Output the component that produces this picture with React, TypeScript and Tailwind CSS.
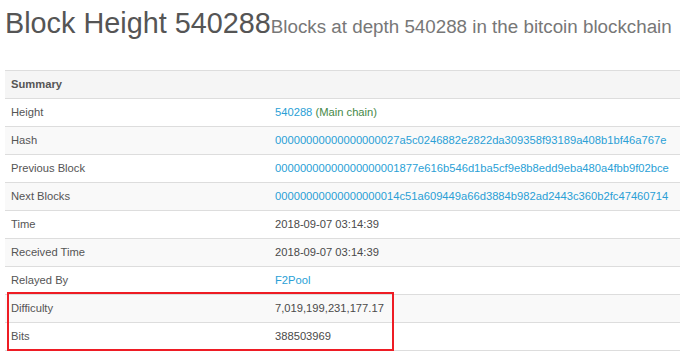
import React from "react";

type Row = { label: string; value: React.ReactNode };

const link = "text-[#2a9fd6]";

const rows: Row[] = [
  {
    label: "Height",
    value: (
      <>
        <span className={link}>540288</span>{" "}
        <span className="text-[#468847]">(Main chain)</span>
      </>
    ),
  },
  { label: "Hash", value: <span className={link}>00000000000000000027a5c0246882e2822da309358f93189a408b1bf46a767e</span> },
  { label: "Previous Block", value: <span className={link}>00000000000000000001877e616b546d1ba5cf9e8b8edd9eba480a4fbb9f02bce</span> },
  { label: "Next Blocks", value: <span className={link}>00000000000000000014c51a609449a66d3884b982ad2443c360b2fc47460714</span> },
  { label: "Time", value: "2018-09-07 03:14:39" },
  { label: "Received Time", value: "2018-09-07 03:14:39" },
  { label: "Relayed By", value: <span className={link}>F2Pool</span> },
  { label: "Difficulty", value: "7,019,199,231,177.17" },
  { label: "Bits", value: "388503969" },
];

export default function App() {
  return (
    <div
      className="relative w-[680px] h-[355px] overflow-hidden bg-white"
      style={{ fontFamily: '"Liberation Sans", Arial, sans-serif' }}
    >
      <div className="pl-[5px] pt-[7px] flex items-baseline whitespace-nowrap">
        <h1 className="text-[28.8px] leading-[32px] text-[#555555] font-normal">Block Height 540288</h1>
        <span className="text-[18.8px] text-[#777777]">Blocks at depth 540288 in the bitcoin blockchain</span>
      </div>
      <div className="mt-[29px] ml-[5px] w-[700px] border-b border-[#dddddd] text-[11.2px] leading-[17px]">
        <div className="flex border-t border-[#dddddd] bg-[#f5f5f5]">
          <div className="w-[264px] px-[6px] py-[5px] font-bold text-[#555555]">Summary</div>
          <div className="flex-1 px-[6px] py-[5px]">&nbsp;</div>
        </div>
        {rows.map((r, i) => (
          <div
            key={r.label}
            className={`flex border-t border-[#dddddd] ${i % 2 === 1 ? "bg-[#f9f9f9]" : "bg-white"}`}
          >
            <div className="w-[264px] shrink-0 px-[6px] py-[5px] text-[#555555]">{r.label}</div>
            <div className="flex-1 px-[6px] py-[5px] text-[#4a4a4a] whitespace-nowrap">{r.value}</div>
          </div>
        ))}
      </div>
      <div className="absolute left-[7px] top-[292px] w-[387px] h-[59px] border-2 border-[#ee1c24]" />
    </div>
  );
}
